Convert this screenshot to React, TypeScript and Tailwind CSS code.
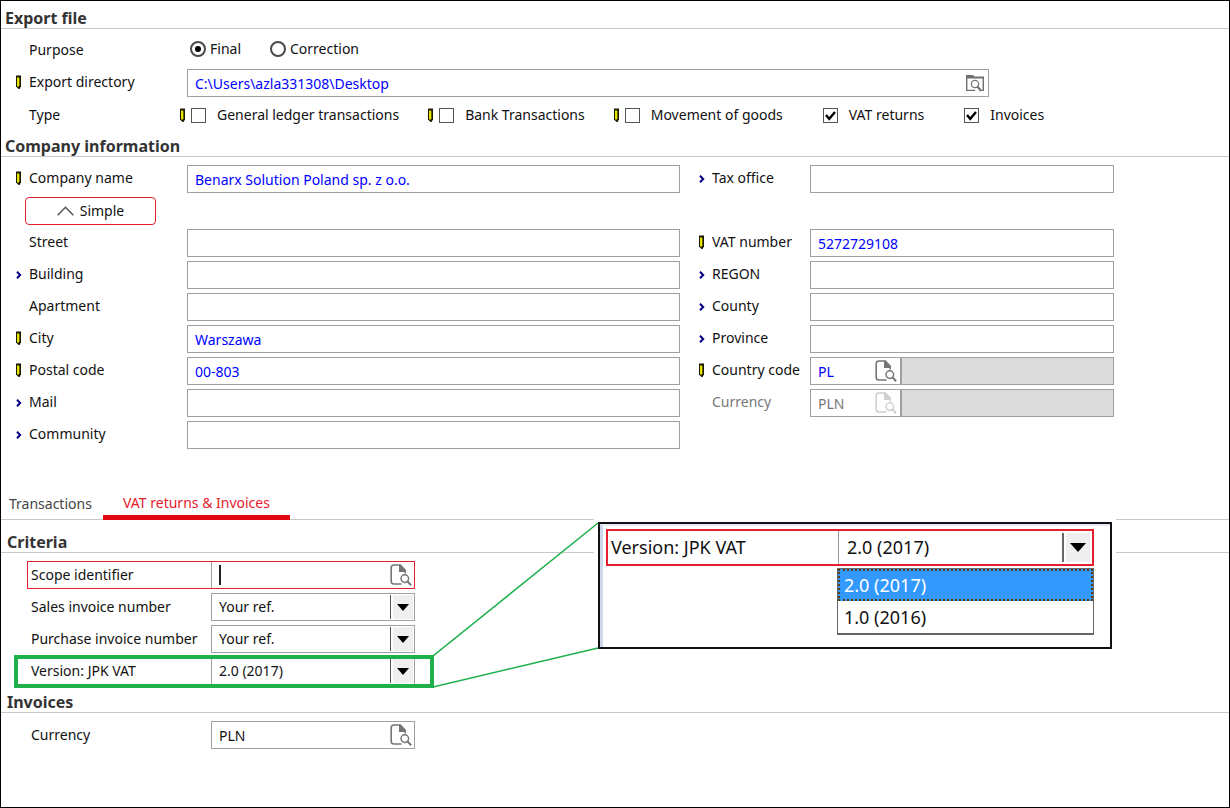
import React from 'react';

type Mark = 'pencil' | 'arrow' | 'none';

function Pencil() {
  return (
    <svg width="5" height="14" viewBox="0 0 5 14" className="shrink-0" aria-hidden="true">
      <path d="M0 0.5h5v11L3.5 14h-1L0 11.5z" fill="#1a1a00" />
      <path d="M1 2.5h2v9H1z" fill="#e8e400" />
      <path d="M3 3h1v8H3z" fill="#6a6400" />
    </svg>
  );
}

function Arrow() {
  return (
    <svg width="6" height="8" viewBox="0 0 6 8" className="mt-0.5 shrink-0" aria-hidden="true">
      <path d="M1 0.7 4.2 4 1 7.3" fill="none" stroke="#000080" strokeWidth="2" />
    </svg>
  );
}

function DocSearch({ faded = false }: { faded?: boolean }) {
  return (
    <svg width="22" height="22" viewBox="0 0 22 22" className={faded ? 'shrink-0 text-[#cfcfcf]' : 'shrink-0 text-[#757575]'} aria-hidden="true">
      <path d="M11.5 20H4a2.8 2.8 0 0 1-2.8-2.8V3.8A2.8 2.8 0 0 1 4 1h6l5.2 5.6v3" fill="none" stroke="currentColor" strokeWidth="1.6" />
      <path d="M9 0.4h1.6L16 6v2H9z" fill="currentColor" />
      <circle cx="14.8" cy="14.6" r="3.8" fill="#fff" stroke="currentColor" strokeWidth="1.5" />
      <path d="m17.5 17.4 3.6 3.8" stroke="currentColor" strokeWidth="2" />
    </svg>
  );
}

function FolderSearch() {
  return (
    <svg width="18" height="17" viewBox="0 0 18 17" aria-hidden="true">
      <path d="M0 0h7l1.5 1.5H18V16h-2v-1.3h.6V3.5H1.4v11.2H9V16H0z" fill="#6e6e6e" />
      <circle cx="9" cy="9" r="3.6" fill="#fff" stroke="#777" strokeWidth="1.3" />
      <path d="m11.3 11.5 4 4.5" stroke="#6e6e6e" strokeWidth="2" />
    </svg>
  );
}

function Heading({ children, indent = false }: { children: React.ReactNode; indent?: boolean }) {
  return (
    <h2
      className={`mb-1.5 h-[26px] border-b border-[#c8c8c8] text-[16px] leading-[30px] font-bold text-[#333] ${
        indent ? 'pl-1.5' : 'pl-1'
      }`}
    >
      {children}
    </h2>
  );
}

interface FieldLabelProps {
  id?: string;
  text: string;
  mark?: Mark;
  right?: boolean;
  muted?: boolean;
}

function FieldLabel({ id, text, mark = 'none', right = false, muted = false }: FieldLabelProps) {
  return (
    <div className={right ? 'flex w-[130px] shrink-0 items-center pb-0.5 pl-[19px]' : 'flex w-[186px] shrink-0 items-center pb-0.5 pl-[15px]'}>
      <span className="flex w-[13px] shrink-0 items-center">
        {mark === 'pencil' && <Pencil />}
        {mark === 'arrow' && <Arrow />}
      </span>
      <label htmlFor={id} className={muted ? 'whitespace-nowrap text-[#777]' : 'whitespace-nowrap'}>
        {text}
      </label>
    </div>
  );
}

interface FieldProps {
  id: string;
  text: string;
  mark?: Mark;
  value?: string;
  right?: boolean;
}

function Field({ id, text, mark, value = '', right }: FieldProps) {
  return (
    <div className="flex h-8 items-center">
      <FieldLabel id={id} text={text} mark={mark} right={right} />
      <input id={id} defaultValue={value} className="h-7 min-w-0 flex-1 border border-[#a0a0a0] px-[7px] pt-px text-[#0000ff]" />
    </div>
  );
}

function CodeField({ id, text, mark, value, muted = false }: FieldProps & { muted?: boolean }) {
  return (
    <div className="flex h-8 items-center">
      <FieldLabel id={id} text={text} mark={mark} right muted={muted} />
      <div className="flex h-7 w-[91px] items-center border border-[#a0a0a0] pr-[3px]">
        <input
          id={id}
          defaultValue={value}
          disabled={muted}
          className={muted ? 'w-full min-w-0 bg-white pt-px pl-[7px] text-[#777]' : 'w-full min-w-0 pt-px pl-[7px] text-[#0000ff]'}
        />
        <DocSearch faded={muted} />
      </div>
      <div className="h-7 flex-1 border border-[#a0a0a0] bg-[#dcdcdc]" />
    </div>
  );
}

function TypeOption({ text, checked = false, pencil = false }: { text: string; checked?: boolean; pencil?: boolean }) {
  return (
    <label className="flex items-center whitespace-nowrap">
      <span className="w-[11px] shrink-0">{pencil && <Pencil />}</span>
      <span className="relative mr-[11px] h-[15px] w-[15px]">
        <input type="checkbox" defaultChecked={checked} className="peer block h-[15px] w-[15px] appearance-none border border-[#555] bg-white" />
        <svg viewBox="0 0 15 15" className="pointer-events-none absolute inset-0 hidden peer-checked:block" aria-hidden="true">
          <path d="m3 7 3.2 3.8L12 4" fill="none" stroke="#000" strokeWidth="2.4" />
        </svg>
      </span>
      {text}
    </label>
  );
}

function PurposeOption({ text, checked = false }: { text: string; checked?: boolean }) {
  return (
    <label className="flex items-center gap-1">
      <span className="relative h-4 w-4">
        <input type="radio" name="purpose" defaultChecked={checked} className="peer block h-4 w-4 appearance-none rounded-full border-2 border-[#4a4a4a] bg-white" />
        <span className="pointer-events-none absolute inset-[5px] hidden rounded-full bg-black peer-checked:block" />
      </span>
      {text}
    </label>
  );
}

function DropButton() {
  return (
    <span className="pointer-events-none absolute inset-y-0.5 right-0.5 flex w-[23px] border-l border-[#555] pl-0.5">
      <span className="flex flex-1 items-center justify-center bg-[#efefef]">
        <svg width="12" height="7" viewBox="0 0 12 7" aria-hidden="true">
          <path d="M0 0h12L6 7z" fill="#000" />
        </svg>
      </span>
    </span>
  );
}

function SelectRow({ id, text, options, framed = false }: { id: string; text: string; options: string[]; framed?: boolean }) {
  return (
    <div className="relative flex h-8 w-[388px] items-center">
      <label htmlFor={id} className="w-[184px] shrink-0 pl-1 whitespace-nowrap">{text}</label>
      <div className="relative flex-1">
        <select id={id} className="block h-7 w-full appearance-none border border-[#a0a0a0] bg-white pl-[7px]">
          {options.map((option) => (
            <option key={option}>{option}</option>
          ))}
        </select>
        <DropButton />
      </div>
      {framed && <div className="pointer-events-none absolute top-0 -right-[19px] -bottom-px -left-[13px] border-4 border-[#1db04b]" />}
    </div>
  );
}

function VersionCallout() {
  return (
    <div className="absolute top-0.5 left-[597px] h-[127px] w-[514px] border-2 border-[#111] bg-white shadow-[0_0_0_4px_#fff]">
      <div className="h-full border-t-2 border-l-[3px] border-t-[#e4e9f5] border-l-[#cfd8ea] pt-[3px] pr-4 pl-[3px] text-[18px]">
        <div className="flex h-[37px] border-2 border-[#e3202b]">
          <label htmlFor="callout-version" className="flex w-[230px] items-center pb-0.5 pl-[3px]">Version: JPK VAT</label>
          <div className="relative flex-1 border-l border-[#999]">
            <select id="callout-version" className="block h-full w-full appearance-none bg-white pb-0.5 pl-2">
              <option>2.0 (2017)</option>
              <option>1.0 (2016)</option>
            </select>
            <span className="pointer-events-none absolute inset-y-0.5 right-0.5 flex w-7 border-l-2 border-[#666] pl-0.5">
              <span className="flex flex-1 items-center justify-center bg-[#efefef]">
                <svg width="16" height="9" viewBox="0 0 16 9" aria-hidden="true">
                  <path d="M0 0h16L8 9z" fill="#000" />
                </svg>
              </span>
            </span>
          </div>
        </div>
        <ul className="mt-0.5 ml-[231px] border border-b-2 border-[#666]">
          <li className="flex h-8 items-center border-2 border-dotted border-[#5b3b14] bg-[#3399ff] pl-1 text-white">2.0 (2017)</li>
          <li className="flex h-8 items-center pl-1.5">1.0 (2016)</li>
        </ul>
      </div>
    </div>
  );
}

export default function App() {
  return (
    <main className="min-h-screen border border-black bg-white pt-0.5 font-['Noto_Sans','Open_Sans',sans-serif] text-[14px] leading-5 text-[#111]">
      <section>
        <Heading>Export file</Heading>
        <div className="flex h-8 items-center">
          <FieldLabel text="Purpose" />
          <div className="flex gap-[29px] pb-1 pl-[3px]">
            <PurposeOption text="Final" checked />
            <PurposeOption text="Correction" />
          </div>
        </div>
        <div className="flex h-8 items-center">
          <FieldLabel id="directory" text="Export directory" mark="pencil" />
          <div className="mr-[240px] flex h-7 flex-1 items-center border border-[#a0a0a0] pr-1">
            <input id="directory" defaultValue="C:\Users\azla331308\Desktop" className="min-w-0 flex-1 pt-px pl-[7px] text-[#0000ff]" />
            <button type="button" aria-label="Browse"><FolderSearch /></button>
          </div>
        </div>
        <div className="flex h-8 items-center">
          <span className="w-[179px] shrink-0 pl-7">Type</span>
          <div className="flex gap-[29px]">
            <TypeOption text="General ledger transactions" pencil />
            <TypeOption text="Bank Transactions" pencil />
            <TypeOption text="Movement of goods" pencil />
            <TypeOption text="VAT returns" checked />
            <TypeOption text="Invoices" checked />
          </div>
        </div>
      </section>

      <section>
        <Heading>Company information</Heading>
        <div className="flex pr-[115px]">
          <div className="flex-1">
            <Field id="company" text="Company name" mark="pencil" value="Benarx Solution Poland sp. z o.o." />
            <div className="flex h-8 items-center pl-6">
              <button type="button" className="flex h-7 w-[131px] items-center justify-center gap-1.5 rounded border border-[#e3202b]">
                <svg width="17" height="10" viewBox="0 0 17 10" aria-hidden="true">
                  <path d="m0.7 9.3 7.8-8 7.8 8" fill="none" stroke="#555" strokeWidth="1.5" />
                </svg>
                Simple
              </button>
            </div>
            <Field id="street" text="Street" />
            <Field id="building" text="Building" mark="arrow" />
            <Field id="apartment" text="Apartment" />
            <Field id="city" text="City" mark="pencil" value="Warszawa" />
            <Field id="postal" text="Postal code" mark="pencil" value="00-803" />
            <Field id="mail" text="Mail" mark="arrow" />
            <Field id="community" text="Community" mark="arrow" />
          </div>
          <div className="w-[434px]">
            <Field id="tax" text="Tax office" mark="arrow" right />
            <div className="h-8" />
            <Field id="vat" text="VAT number" mark="pencil" value="5272729108" right />
            <Field id="regon" text="REGON" mark="arrow" right />
            <Field id="county" text="County" mark="arrow" right />
            <Field id="province" text="Province" mark="arrow" right />
            <CodeField id="country" text="Country code" mark="pencil" value="PL" />
            <CodeField id="company-currency" text="Currency" value="PLN" muted />
          </div>
        </div>
      </section>

      <nav className="mt-[37px] flex h-8 items-stretch border-b border-[#c8c8c8]">
        <button type="button" className="w-[102px] pl-2 text-left text-[#444]">Transactions</button>
        <button type="button" className="-mb-px w-[187px] border-b-[5px] border-[#e30613] pt-0.5 text-[#e3202b]">VAT returns &amp; Invoices</button>
      </nav>

      <section className="relative">
        <div className="pt-[7px]">
          <Heading indent>Criteria</Heading>
        </div>
        <div className="pl-[26px]">
          <div className="flex h-8 items-center">
            <div className="flex h-7 w-[388px] items-center border border-[#e3202b]">
              <label htmlFor="scope" className="w-[183px] shrink-0 pl-[3px]">Scope identifier</label>
              <div className="flex h-full min-w-0 flex-1 items-center border-l border-[#a0a0a0] pr-0.5 pl-[7px]">
                <span className="h-5 w-0.5 bg-[#222]" />
                <input id="scope" className="min-w-0 flex-1" />
                <DocSearch />
              </div>
            </div>
          </div>
          <SelectRow id="sales" text="Sales invoice number" options={['Your ref.']} />
          <SelectRow id="purchase" text="Purchase invoice number" options={['Your ref.']} />
          <SelectRow id="version" text="Version: JPK VAT" options={['2.0 (2017)', '1.0 (2016)']} framed />
        </div>
        <svg width="166" height="168" viewBox="0 0 166 168" fill="none" className="pointer-events-none absolute top-0 left-[432px] z-10" aria-hidden="true">
          <path d="M0 136 165 3M0 167l165-39" stroke="#1db04b" strokeWidth="1.5" />
        </svg>
        <VersionCallout />
      </section>

      <section>
        <Heading indent>Invoices</Heading>
        <div className="flex h-8 items-center pl-[26px]">
          <label htmlFor="currency" className="w-[184px] shrink-0 pl-1">Currency</label>
          <div className="flex h-7 w-[204px] items-center border border-[#a0a0a0] pr-0.5">
            <input id="currency" defaultValue="PLN" className="min-w-0 flex-1 pt-px pl-[7px]" />
            <DocSearch />
          </div>
        </div>
      </section>
    </main>
  );
}
